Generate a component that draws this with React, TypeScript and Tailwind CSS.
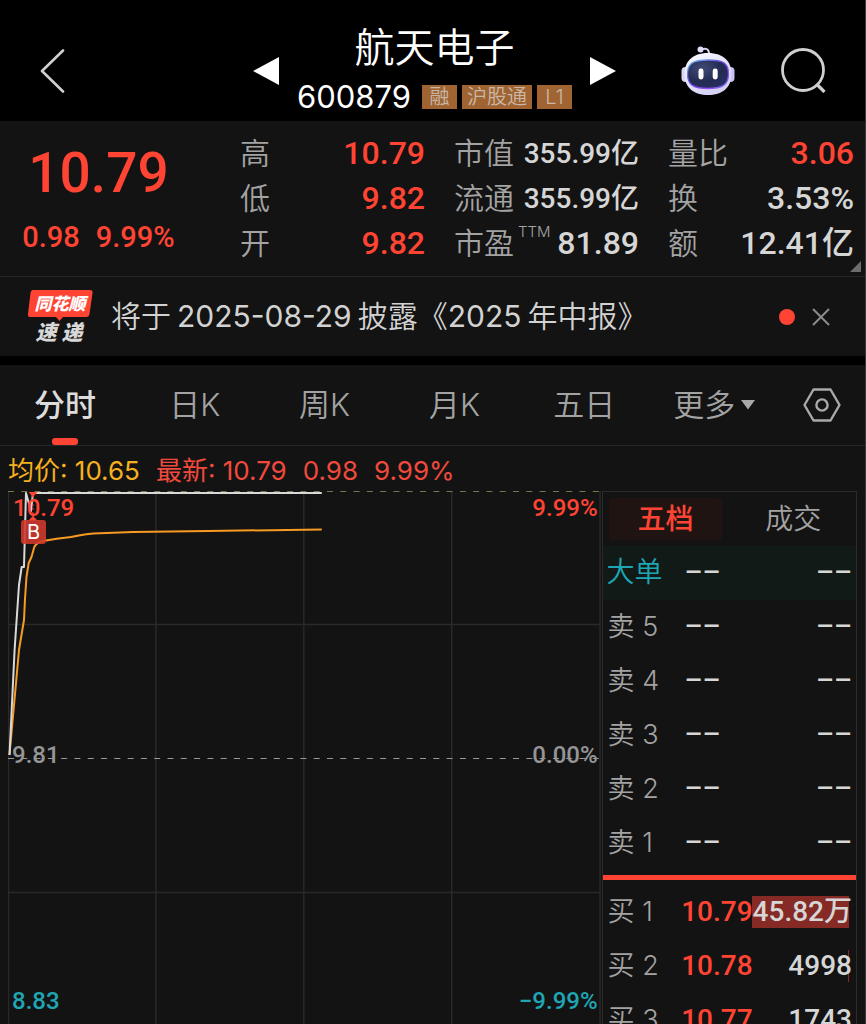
import type { ReactNode } from "react";

type Tone = "red" | "plain";

interface Stat {
  label: string;
  note?: string;
  value: string;
  tone: Tone;
  compact?: boolean;
}

const statColumns: Stat[][] = [
  [
    { label: "高", value: "10.79", tone: "red" },
    { label: "低", value: "9.82", tone: "red" },
    { label: "开", value: "9.82", tone: "red" },
  ],
  [
    { label: "市值", value: "355.99亿", tone: "plain", compact: true },
    { label: "流通", value: "355.99亿", tone: "plain", compact: true },
    { label: "市盈", note: "TTM", value: "81.89", tone: "plain" },
  ],
  [
    { label: "量比", value: "3.06", tone: "red" },
    { label: "换", value: "3.53%", tone: "plain" },
    { label: "额", value: "12.41亿", tone: "plain" },
  ],
];

const periods = ["分时", "日K", "周K", "月K", "五日"];

const asks = ["卖 5", "卖 4", "卖 3", "卖 2", "卖 1"];

const bids = [
  { label: "买 1", price: "10.79", volume: "45.82万", share: 38.4 },
  { label: "买 2", price: "10.78", volume: "4998", share: 0.4 },
  { label: "买 3", price: "10.77", volume: "1743", share: 0 },
];

const numeric = "font-['Roboto','Noto_Sans_CJK_SC',sans-serif] font-medium";

function Badge({ children }: { children: ReactNode }) {
  return (
    <span className="flex h-6 min-w-[35px] items-center justify-center bg-[#a06432] px-[5px] text-[20px] leading-6 font-[350] text-[#c9b8a8]">
      {children}
    </span>
  );
}

function RobotIcon() {
  return (
    <svg width="54" height="50" viewBox="0 0 54 50" aria-hidden="true">
      <defs>
        <linearGradient id="shell" x1="0" y1="0" x2="0.6" y2="1">
          <stop offset="0" stopColor="#ffffff" />
          <stop offset="0.55" stopColor="#e3e2fa" />
          <stop offset="1" stopColor="#d3d0f2" />
        </linearGradient>
        <linearGradient id="rim" x1="0" y1="0" x2="1" y2="1">
          <stop offset="0" stopColor="#6fc6f0" />
          <stop offset="0.45" stopColor="#6b4be0" />
          <stop offset="0.75" stopColor="#9a4df5" />
          <stop offset="1" stopColor="#5a7be8" />
        </linearGradient>
        <radialGradient id="visor" cx="0.35" cy="0.3" r="0.8">
          <stop offset="0" stopColor="#414b76" />
          <stop offset="0.6" stopColor="#232b52" />
          <stop offset="1" stopColor="#2b2f66" />
        </radialGradient>
      </defs>
      <path d="M20 3.500C25 1.500 28.500 3 28 9" fill="none" stroke="#d6d4f2" strokeWidth="2" />
      <circle cx="19.500" cy="3.500" r="3" fill="#dcdaf5" />
      <rect x="0.500" y="21" width="8" height="15" rx="4" fill="#d9d7f5" />
      <rect x="45.500" y="21" width="8" height="15" rx="4" fill="#c6c2ee" />
      <path d="M27 7C43 7 50.500 16 50.500 28C50.500 42 41 49 27 49C13 49 3.500 42 3.500 28C3.500 16 11 7 27 7Z" fill="url(#shell)" />
      <path d="M27 14C42 14 47.500 17 47.500 28C47.500 39 41 42.500 27 42.500C13 42.500 6.500 39 6.500 28C6.500 17 12 14 27 14Z" fill="url(#visor)" stroke="url(#rim)" strokeWidth="1.300" />
      <rect x="17.500" y="22.500" width="5" height="11" rx="2.400" fill="#fff" />
      <rect x="31.700" y="22.500" width="5" height="11" rx="2.400" fill="#fff" />
    </svg>
  );
}

function Header() {
  return (
    <header className="grid h-[121px] grid-cols-[1fr_auto_1fr] items-center bg-black pt-5 pl-1">
      <button type="button" aria-label="返回" className="ml-9 justify-self-start">
        <svg width="25" height="44" viewBox="0 0 25 44" fill="none" stroke="#cfcfcf" strokeWidth="2.600" strokeLinecap="round" strokeLinejoin="round">
          <path d="M23 1.500 2 22 23 42.500" />
        </svg>
      </button>
      <div className="flex items-center gap-[18px]">
        <button type="button" aria-label="上一只">
          <svg width="26" height="28" viewBox="0 0 26 28" fill="#fff">
            <path d="M0 14 26 0V28Z" />
          </svg>
        </button>
        <div className="flex flex-col items-center">
          <h1 className="text-[40px] leading-[52px] font-[350] text-white">航天电子</h1>
          <div className="flex items-center gap-[5px]">
            <span className="mr-[6px] text-[31px] leading-[46px] font-normal text-white">600879</span>
            <Badge>融</Badge>
            <Badge>沪股通</Badge>
            <Badge>L1</Badge>
          </div>
        </div>
        <button type="button" aria-label="下一只">
          <svg width="26" height="28" viewBox="0 0 26 28" fill="#fff">
            <path d="M26 14 0 0V28Z" />
          </svg>
        </button>
      </div>
      <div className="mr-[39px] flex items-center gap-[46px] justify-self-end">
        <button type="button" aria-label="智能助手">
          <RobotIcon />
        </button>
        <button type="button" aria-label="搜索">
          <svg width="45" height="45" viewBox="0 0 45 45" fill="none" stroke="#cfcfcf" strokeWidth="2.800">
            <circle cx="22" cy="22" r="20.500" />
            <path d="M35.500 36 43.500 44" strokeWidth="3.200" />
          </svg>
        </button>
      </div>
    </header>
  );
}

function Quote() {
  return (
    <section className="relative grid grid-cols-[211fr_185fr_185fr_186fr] gap-x-[29px] border-b border-[#272727] bg-[#131313] pt-[10px] pr-[11px] pb-[10px]">
      <div className={`flex flex-col items-center pr-[14px] text-[#ff4433] ${numeric}`}>
        <div className="text-[55px] leading-[84px]">10.79</div>
        <div className="flex gap-4 text-[29px] leading-[44px]">
          <span>0.98</span>
          <span>9.99%</span>
        </div>
      </div>
      {statColumns.map((column) => (
        <dl key={column[0].label}>
          {column.map((stat) => (
            <div key={stat.label} className="flex items-center justify-between">
              <dt className="flex text-[30px] leading-[45px] font-[350] whitespace-nowrap text-[#a3a3a3]">
                {stat.label}
                {stat.note && <sup className="top-0 ml-1 text-[15px] leading-[22px] font-light">{stat.note}</sup>}
              </dt>
              <dd
                className={`${numeric} leading-[45px] whitespace-nowrap ${stat.compact ? "text-[28px]" : "text-[32px]"} ${
                  stat.tone === "red" ? "text-[#ff4433]" : "text-[#d6d6d6]"
                }`}
              >
                {stat.value}
              </dd>
            </div>
          ))}
        </dl>
      ))}
      <svg className="absolute right-1 bottom-1" width="11" height="11" viewBox="0 0 11 11" fill="#6c6c6c" aria-hidden="true">
        <path d="M11 0V11H0Z" />
      </svg>
    </section>
  );
}

function Notice() {
  return (
    <section className="flex h-[79px] items-center bg-[#131313] pr-[35px] pl-7">
      <svg className="overflow-visible" width="65" height="56" viewBox="0 0 65 56" role="img" aria-label="同花顺速递">
        <path d="M5 1H62Q65 1 64.500 4L61.500 25Q61 28 58 28H35L31.500 32 28 28H2Q-.5 28 0 25L2.500 4Q3 1 5 1Z" fill="#ff4433" />
        <text x="32" y="21" textAnchor="middle" fill="#fff" className="font-['Noto_Sans_CJK_SC',sans-serif] text-[17px] font-black italic">
          同花顺
        </text>
        <text x="31" y="51" textAnchor="middle" fill="#d8d8d8" className="font-['Noto_Sans_CJK_SC',sans-serif] text-[21px] font-black italic">
          速 递
        </text>
      </svg>
      <a href="#report" className="ml-[18px] flex flex-1 text-[30px] leading-[45px] font-[350] whitespace-nowrap text-[#d2d2d2]">
        <span>将于</span>
        <span className="mx-[6px] font-normal">2025-08-29</span>
        <span>披露《</span>
        <span className="mr-[6px] font-normal">2025</span>
        <span>年中报》</span>
      </a>
      <span className="mr-[17px] size-4 rounded-full bg-[#ff4433]" />
      <button type="button" aria-label="关闭">
        <svg width="18" height="18" viewBox="0 0 18 18" stroke="#8c8c8c" strokeWidth="2">
          <path d="M1 1 17 17M17 1 1 17" />
        </svg>
      </button>
    </section>
  );
}

function PeriodTabs() {
  return (
    <nav className="mt-[9px] flex h-[81px] items-stretch border-b border-[#272727] bg-[#131313] text-[31px] font-[350] text-[#a3a3a3]">
      {periods.map((period, index) => (
        <button key={period} type="button" className={`relative flex-[130] ${index === 0 ? "font-medium text-[#dcdcdc]" : ""}`}>
          {period}
          {index === 0 && <span className="absolute bottom-0 left-1/2 h-[7px] w-[26px] -translate-x-1/2 rounded-[3px] bg-[#ff4433]" />}
        </button>
      ))}
      <button type="button" className="flex flex-[130] items-center justify-center gap-[6px]">
        更多
        <svg width="14" height="11" viewBox="0 0 14 11" fill="#a9a9a9">
          <path d="M0 0H14L7 9.500Z" />
        </svg>
      </button>
      <button type="button" aria-label="设置" className="flex flex-[86] items-center justify-center">
        <svg width="38" height="34" viewBox="0 0 38 34" fill="none" stroke="#a9a9a9" strokeWidth="2.400" strokeLinejoin="round">
          <path d="M10.500 1.500H27.500L36.500 17 27.500 32.500H10.500L1.500 17Z" />
          <circle cx="19" cy="17" r="5.600" />
        </svg>
      </button>
    </nav>
  );
}

function IntradayChart() {
  return (
    <div className={`relative h-[535px] min-w-0 flex-[595] text-[24px] leading-7 ${numeric}`}>
      <svg className="block h-full w-full" viewBox="0 0 594 535" preserveAspectRatio="none" fill="none">
        <path d="M.5 0V535M148 0V535M296 0V535M444 0V535M592.500 0V535M0 133.500H593M0 401.500H593" stroke="#292929" strokeWidth="1.500" />
        <path d="M0 .5H593" stroke="#7d7350" strokeDasharray="6 7.300" />
        <path d="M0 267.500H593" stroke="#9a9a9a" strokeDasharray="6 7.300" />
        <path
          d="M1.500 264 11 159 16 129 17 108 18.500 86 20.700 72 23.500 66 26.300 56C28 52 31 51 35 50C45 48 52 47 63 46C75 43.500 84 42.500 92 42.300L125 41 200 40 314 38.500"
          stroke="#f79b22"
          strokeWidth="2"
          strokeLinejoin="round"
        />
        <path d="M1.500 264 6.600 159 11 94 13.700 76H16L18 2 23 20 25 2H314" stroke="#d9d9d9" strokeWidth="2" strokeLinejoin="round" />
        <path d="M20.500 1H29.500L25 6ZM20 30 25 25 30 30Z" fill="#ff4433" />
        <path d="M25 5V26" stroke="#ff4433" strokeDasharray="2 2" />
      </svg>
      <span className="absolute top-[3px] left-[5px] text-[#ff4433]">10.79</span>
      <span className="absolute top-[3px] right-1 text-[#ff4433]">9.99%</span>
      <span className="absolute top-[250px] left-1 text-[#959595]">9.81</span>
      <span className="absolute top-[250px] right-1 text-[#959595]">0.00%</span>
      <span className="absolute top-[496px] left-1 text-[#1fa5b4]">8.83</span>
      <span className="absolute top-[496px] right-1 text-[#1fa5b4]">−9.99%</span>
      <span className="absolute top-[29px] left-[13px] flex h-6 w-[25px] items-center justify-center rounded-[3px] bg-[#cf3a2e]/90 font-['Inter',sans-serif] text-[20px] font-normal text-white">
        B
      </span>
    </div>
  );
}

const labelCell = "w-[82px] pl-[5px] text-left font-['Inter','Noto_Sans_CJK_SC',sans-serif] text-[27px] font-[350] whitespace-nowrap text-[#a3a3a3]";

function OrderBook() {
  return (
    <aside className="min-w-0 flex-[254] border-t border-r border-l border-[#2b2b2b]">
      <div className="flex h-[54px] items-center gap-[14px] px-[6px] text-[28px]">
        <button type="button" className="h-[42px] flex-1 rounded-[4px] bg-[#201413] font-medium text-[#ff4433]">
          五档
        </button>
        <button type="button" className="h-[42px] flex-1 font-[350] text-[#a3a3a3]">
          成交
        </button>
      </div>
      <table className={`w-full border-collapse text-[28px] leading-[54px] text-[#d6d6d6] ${numeric}`}>
        <tbody>
          <tr className="h-[54px] bg-[#111a16]">
            <th scope="row" className="w-[82px] pl-1 text-left text-[28px] font-[350] whitespace-nowrap text-[#1fa5b4]">
              大单
            </th>
            <td>––</td>
            <td className="pr-1 text-right">––</td>
          </tr>
          {asks.map((label) => (
            <tr key={label} className="h-[54px]">
              <th scope="row" className={labelCell}>
                {label}
              </th>
              <td>––</td>
              <td className="pr-1 text-right">––</td>
            </tr>
          ))}
        </tbody>
      </table>
      <div className="my-[5px] h-[5px] bg-[#ff4433]" />
      <table className={`w-full border-collapse text-[28px] leading-[54px] text-[#d6d6d6] ${numeric}`}>
        <tbody>
          {bids.map((bid) => (
            <tr key={bid.label} className="relative h-[54px]">
              <th scope="row" className={labelCell}>
                {bid.label}
              </th>
              <td className="relative z-10 text-[#ff4433]">{bid.price}</td>
              <td className="pr-1 text-right whitespace-nowrap">
                <span className="absolute top-[11px] right-[7px] h-8 bg-[#862a26]" style={{ width: `${bid.share}%` }} />
                <span className="relative">{bid.volume}</span>
              </td>
            </tr>
          ))}
        </tbody>
      </table>
    </aside>
  );
}

export default function App() {
  return (
    <div className="h-screen overflow-hidden border-r border-[#3a3a3a] bg-black font-['Inter','Noto_Sans_CJK_SC',sans-serif]">
      <Header />
      <Quote />
      <Notice />
      <PeriodTabs />
      <main className="bg-[#131313] pr-2 pl-2">
        <div className="flex h-[45px] items-center gap-4 pt-[3px] text-[26px] font-normal text-[#f04a3c]">
          <span className="text-[#f5b01e]">均价: 10.65</span>
          <span>最新: 10.79</span>
          <span>0.98</span>
          <span>9.99%</span>
        </div>
        <div className="flex">
          <IntradayChart />
          <OrderBook />
        </div>
      </main>
    </div>
  );
}
